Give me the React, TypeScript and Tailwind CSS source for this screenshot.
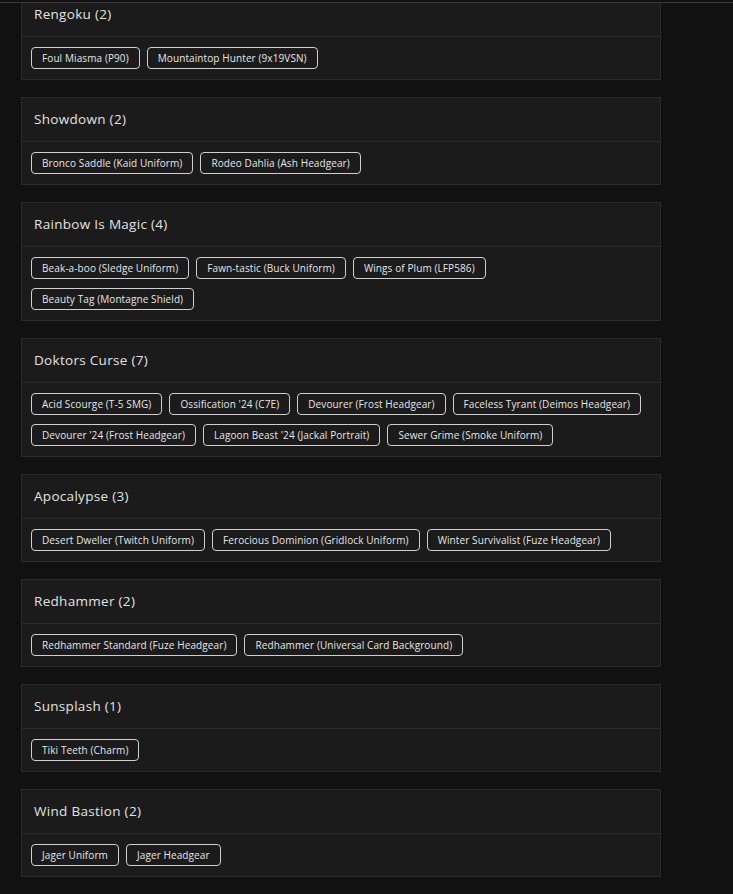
import React from 'react';

interface Collection {
  name: string;
  items: string[];
}

const collections: Collection[] = [
  { name: 'Rengoku', items: ['Foul Miasma (P90)', 'Mountaintop Hunter (9x19VSN)'] },
  { name: 'Showdown', items: ['Bronco Saddle (Kaid Uniform)', 'Rodeo Dahlia (Ash Headgear)'] },
  {
    name: 'Rainbow Is Magic',
    items: [
      'Beak-a-boo (Sledge Uniform)',
      'Fawn-tastic (Buck Uniform)',
      'Wings of Plum (LFP586)',
      'Beauty Tag (Montagne Shield)',
    ],
  },
  {
    name: 'Doktors Curse',
    items: [
      'Acid Scourge (T-5 SMG)',
      "Ossification '24 (C7E)",
      'Devourer (Frost Headgear)',
      'Faceless Tyrant (Deimos Headgear)',
      "Devourer '24 (Frost Headgear)",
      "Lagoon Beast '24 (Jackal Portrait)",
      'Sewer Grime (Smoke Uniform)',
    ],
  },
  {
    name: 'Apocalypse',
    items: [
      'Desert Dweller (Twitch Uniform)',
      'Ferocious Dominion (Gridlock Uniform)',
      'Winter Survivalist (Fuze Headgear)',
    ],
  },
  {
    name: 'Redhammer',
    items: ['Redhammer Standard (Fuze Headgear)', 'Redhammer (Universal Card Background)'],
  },
  { name: 'Sunsplash', items: ['Tiki Teeth (Charm)'] },
  { name: 'Wind Bastion', items: ['Jager Uniform', 'Jager Headgear'] },
];

const CollectionCard: React.FC<{ collection: Collection }> = ({ collection }) => {
  return (
    <div className="w-[640px] border border-[#2a2a2a] bg-[#1b1b1b] mb-[17px]">
      <div className="h-[44px] flex items-center px-[12px] border-b border-[#2c2c2c]">
        <h3 className="text-[13.5px] font-medium text-[#e2e2e2] tracking-[0.3px]">
          {collection.name} ({collection.items.length})
        </h3>
      </div>
      <div className="flex flex-wrap gap-x-[7px] gap-y-[9px] px-[9px] py-[10px]">
        {collection.items.map((item, index) => (
          <span
            key={index}
            className="h-[22px] flex items-center px-[10px] border border-[#cfcfcf] rounded-[4px] text-[10px] text-[#e6e6e6] tracking-[0.1px]"
          >
            {item}
          </span>
        ))}
      </div>
    </div>
  );
};

export default function App() {
  return (
    <div
      className="min-h-screen bg-[#111111] pt-[2px]"
      style={{ fontFamily: '"Open Sans", "Noto Sans", sans-serif' }}
    >
      <div className="border-t border-[#3a3a3a] h-[891px] overflow-hidden">
        <div className="pl-[21px] -mt-[11px]">
          {collections.map((c, i) => (
            <CollectionCard key={i} collection={c} />
          ))}
        </div>
      </div>
    </div>
  );
}
